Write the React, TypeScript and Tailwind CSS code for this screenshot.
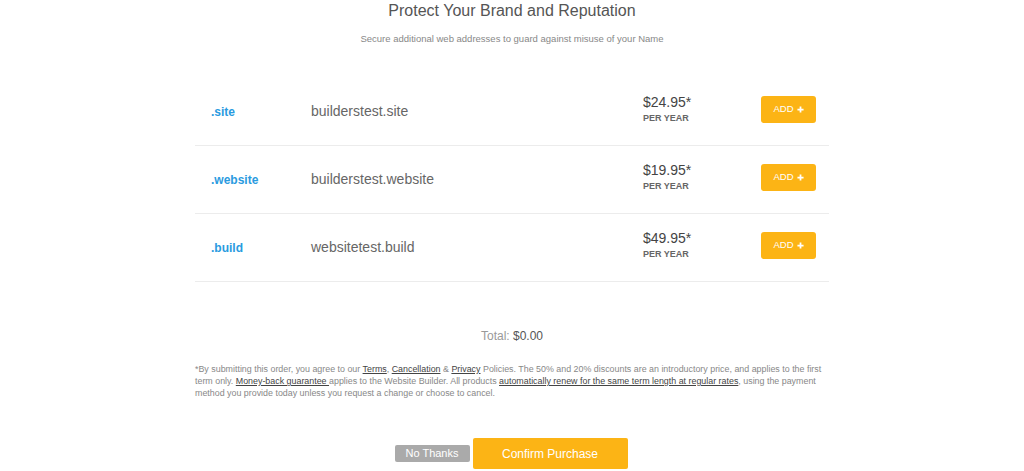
import React from "react";

const domains = [
    { tld: ".site", name: "builderstest.site", price: "$24.95" },
    { tld: ".website", name: "builderstest.website", price: "$19.95" },
    { tld: ".build", name: "websitetest.build", price: "$49.95" },
];

const DomainRow = ({ tld, name, price }: { tld: string; name: string; price: string }) => (
    <div className="flex h-[68px] items-center border-b border-[#ececec] pl-4 pr-[13px]">
        <div className="w-[100px] text-[12px] font-bold text-[#2a9be0]">{tld}</div>
        <div className="flex-1 text-[14px] text-[#666]">{name}</div>
        <div className="w-[118px] pb-[5px] leading-none">
            <div className="text-[14px] text-[#444]">{price}*</div>
            <div className="mt-[5px] text-[9px] font-semibold text-[#666]">PER YEAR</div>
        </div>
        <button className="mb-[5px] flex h-[27px] w-[55px] items-center justify-center gap-[3px] rounded-[3px] bg-[#fcb415] text-[9.5px] text-white">
            ADD
            <svg width="7" height="7" viewBox="0 0 8 8">
                <path d="M4 0.5v7M0.5 4h7" stroke="#fff" strokeWidth="2" />
            </svg>
        </button>
    </div>
);

export default function App() {
    return (
        <div className="h-[471px] w-[1024px] bg-white font-['Liberation_Sans',Arial,sans-serif]">
            <div className="mx-auto w-[634px]">
                <h1 className="pt-[1px] text-center text-[16px] leading-[20px] text-[#555]">
                    Protect Your Brand and Reputation
                </h1>
                <p className="mt-[12px] text-center text-[9.5px] leading-[12px] text-[#888]">
                    Secure additional web addresses to guard against misuse of your Name
                </p>

                {/* Domain list */}
                <div className="mt-[33px]">
                    {domains.map((d) => (
                        <DomainRow key={d.tld} {...d} />
                    ))}
                </div>

                <div className="mt-[47px] text-center text-[12px] leading-[14px]">
                    <span className="text-[#999]">Total: </span>
                    <span className="text-[#555]">$0.00</span>
                </div>

                <p className="-mr-[6px] mt-[20px] text-[8.9px] leading-[12px] text-[#888]">
                    *By submitting this order, you agree to our{" "}
                    <span className="text-[#444] underline">Terms</span>,{" "}
                    <span className="text-[#444] underline">Cancellation</span> &amp;{" "}
                    <span className="text-[#444] underline">Privacy</span> Policies. The 50% and 20% discounts are an
                    introductory price, and applies to the first term only.{" "}
                    <span className="text-[#444] underline">Money-back guarantee </span>applies to the Website Builder.
                    All products{" "}
                    <span className="text-[#444] underline">
                        automatically renew for the same term length at regular rates
                    </span>
                    , using the payment method you provide today unless you request a change or choose to cancel.
                </p>

                <div className="mt-[39px] flex items-center justify-center gap-[3px] pr-[2px]">
                    <button className="h-[17px] w-[75px] rounded-[2px] bg-[#aaa] text-[11px] text-white">No Thanks</button>
                    <button className="h-[31px] w-[155px] rounded-[2px] bg-[#fcb415] text-[12px] text-white">
                        Confirm Purchase
                    </button>
                </div>
            </div>
        </div>
    );
}
